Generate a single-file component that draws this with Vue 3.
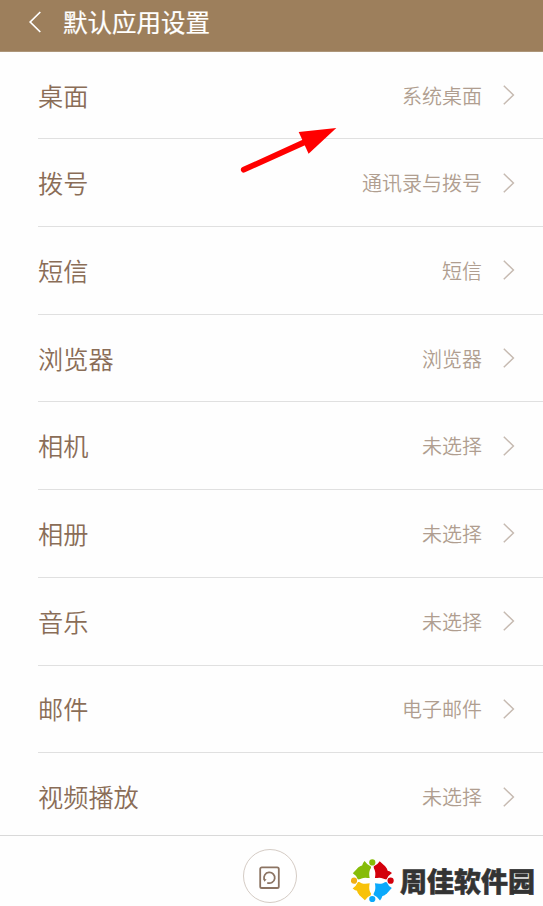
<script setup>
const items = [
  { label: '桌面', value: '系统桌面' },
  { label: '拨号', value: '通讯录与拨号' },
  { label: '短信', value: '短信' },
  { label: '浏览器', value: '浏览器' },
  { label: '相机', value: '未选择' },
  { label: '相册', value: '未选择' },
  { label: '音乐', value: '未选择' },
  { label: '邮件', value: '电子邮件' },
  { label: '视频播放', value: '未选择' }
]
const petals = [
  { color: '#86bc08', angle: 0 },
  { color: '#d3000c', angle: 90 },
  { color: '#0ba9fb', angle: 180 },
  { color: '#f8c20a', angle: 270 }
]
const dots = [
  { x: 21.3, y: 3.4, color: '#86bc08' },
  { x: 39.6, y: 21.7, color: '#d3000c' },
  { x: 21.3, y: 40, color: '#0ba9fb' },
  { x: 3, y: 21.7, color: '#f0ae16' }
]
</script>

<template>
  <div class="screen">
    <header class="header">
      <svg class="back" width="14" height="22" viewBox="0 0 14 22">
        <path d="M12.3 1 2.2 11l10.1 10" fill="none" stroke="#fff" stroke-width="1.7" />
      </svg>
      <h1 class="title">默认应用设置</h1>
    </header>

    <main class="list">
      <div v-for="item in items" :key="item.label" class="row">
        <span class="label">{{ item.label }}</span>
        <span class="value">{{ item.value }}</span>
        <svg class="chevron" width="12" height="20" viewBox="0 0 12 20">
          <path d="M.8.7 10.4 10 .8 19.3" fill="none" stroke="#c6bab1" stroke-width="1.5" />
        </svg>
      </div>
    </main>

    <footer class="footer">
      <button class="round" aria-label="设置">
        <svg width="22" height="24" viewBox="0 0 22 24">
          <rect x="1.2" y="1.4" width="18.6" height="20.6" rx="1.6" fill="none" stroke="#8c7463" stroke-width="1.8" />
          <path d="M5.3 13.6A5.4 5.4 0 1 1 8.2 16.7" fill="none" stroke="#8c7463" stroke-width="1.8" />
          <path d="M4.2 12.6l3.4.9-2.3 2.3z" fill="#8c7463" />
        </svg>
      </button>
      <div class="brand">
        <svg class="logo" width="44" height="44" viewBox="0 0 44 44">
          <g v-for="p in petals" :key="p.color" :transform="`rotate(${p.angle} 21.3 21.7)`">
            <path
              d="M13.6 2Q15.8 5.6 19.9 7.4L21.3 21.7 6.8 20.2Q5.2 16.3 1.8 14.3L6.3 9.4Q8.5 7.4 11.6 8.8 10.3 5.6 13.6 2Z"
              :fill="p.color"
            />
            <path d="M6.4 9.3 9 7.2 12.3 6 13 10 9 12Z" :fill="p.color" />
          </g>
          <path d="M21.3 7.4C25 11 24.6 15 23.9 19.1 28 18.4 32 18 35.6 21.7 32 25.4 28 25 23.9 24.3 24.6 28.4 25 32.4 21.3 36 17.6 32.4 18 28.4 18.7 24.3 14.6 25 10.6 25.4 7 21.7 10.6 18 14.6 18.4 18.7 19.1 18 15 17.6 11 21.3 7.4Z" fill="#fff" />
          <circle v-for="d in dots" :key="d.color" :cx="d.x" :cy="d.y" r="3.1" :fill="d.color" />
        </svg>
        <span class="brand-name">周佳软件园</span>
      </div>
    </footer>

    <svg class="pointer" width="100" height="54" viewBox="0 0 100 54">
      <path d="M3.8 49.7 66 21.5" stroke="#f00" stroke-width="5.8" stroke-linecap="round" />
      <path d="M58.7 12.1 96.3 8 68.6 33.7Z" fill="#f00" />
    </svg>
  </div>
</template>

<style>
body {
  margin: 0;
  background: #fefefe;
}
</style>

<style scoped>
.screen {
  position: relative;
  display: flex;
  flex-direction: column;
  box-sizing: border-box;
  width: 100%;
  height: 906px;
  overflow: hidden;
  background: #fefefe;
  font-family: "Noto Sans CJK SC", sans-serif;
}
.header {
  display: flex;
  align-items: center;
  flex: none;
  box-sizing: border-box;
  height: 52px;
  padding: 0 0 8px 28px;
  background: #9d7f5c;
  border-bottom: 1px solid #ad9679;
}
.back {
  flex: none;
  margin-right: 21px;
}
.title {
  margin: 0;
  font-size: 24.5px;
  line-height: 36px;
  font-weight: 400;
  color: #fff;
  -webkit-text-stroke: 0.2px #fff;
}
.list {
  flex: none;
  height: 783px;
  overflow: hidden;
}
.row {
  display: flex;
  align-items: center;
  box-sizing: border-box;
  height: 87.7px;
  margin-left: 38px;
  padding-right: 28px;
  border-bottom: 1px solid #e0e0e0;
}
.row:first-child {
  height: 87.4px;
}
.label {
  flex: 1;
  font-size: 25.2px;
  line-height: 37px;
  font-weight: 350;
  color: #8a6d57;
}
.value {
  padding-top: 1px;
  font-size: 20px;
  line-height: 30px;
  font-weight: 350;
  color: #b09e90;
}
.chevron {
  flex: none;
  margin: 0 0 0 21px;
}
.footer {
  display: grid;
  grid-template-columns: 1fr 54px 1fr;
  align-items: center;
  flex: 1;
  box-sizing: border-box;
  padding-top: 10px;
  border-top: 1px solid #d9d9d9;
}
.round {
  grid-column: 2;
  display: flex;
  align-items: center;
  justify-content: center;
  box-sizing: border-box;
  width: 54px;
  height: 54px;
  margin: 0 0 0 -2px;
  padding: 4px 0 0;
  border: 1px solid #d5ccc5;
  border-radius: 50%;
  background: #fff;
}
.brand {
  display: flex;
  align-items: center;
  justify-content: flex-end;
  padding: 10px 8px 0 0;
}
.logo {
  flex: none;
  margin-right: 5px;
}
.brand-name {
  font-size: 27px;
  line-height: 40px;
  font-weight: 900;
  color: #333;
  white-space: nowrap;
  -webkit-text-stroke: 0.5px #333;
}
.pointer {
  position: absolute;
  left: 240px;
  top: 120px;
  overflow: visible;
}
</style>
